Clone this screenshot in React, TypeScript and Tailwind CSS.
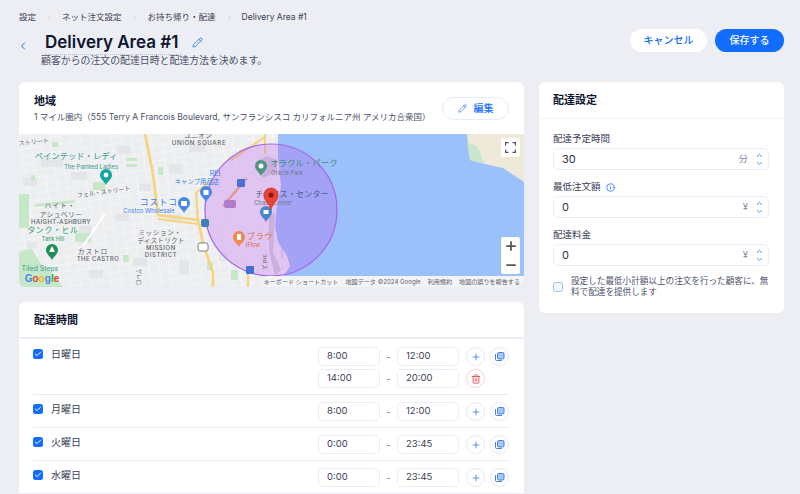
import { Check, ChevronDown, ChevronLeft, ChevronRight, ChevronUp, Info, Minus, Pencil, Plus, Trash2 } from "lucide-react";

const font = "font-['Inter','Noto_Sans_CJK_JP',sans-serif]";

function CopyIcon() {
    return (
        <svg width="11" height="11" viewBox="0 0 11 11" fill="none">
            <rect x="3.5" y="1.5" width="6.5" height="6.5" rx="1.2" fill="#a8c6f7" stroke="#3f80ee" />
            <path d="M1.5 3.5v5a1 1 0 0 0 1 1h5" stroke="#3f80ee" strokeLinecap="round" />
        </svg>
    );
}

const PIN = "M0 0c-2-4-6-6-6-10a6 6 0 1 1 12 0c0 4-4 6-6 10Z";

function Pin({ x, y, color, children }: { x: number; y: number; color: string; children?: React.ReactNode }) {
    return (
        <g transform={`translate(${x} ${y})`}>
            <path d={PIN} fill={color} />
            {children}
        </g>
    );
}

function MapArt() {
    const greys = [
        [22, 24, 22, 9], [52, 38, 16, 8], [4, 44, 14, 8], [98, 12, 14, 8], [120, 50, 12, 7],
        [150, 30, 14, 10], [170, 10, 16, 8], [150, 80, 12, 8], [96, 80, 14, 7], [60, 92, 12, 7],
        [114, 124, 14, 8], [160, 126, 10, 14], [200, 120, 8, 7], [8, 108, 10, 6], [70, 136, 14, 8],
    ];
    const greens = [
        [0, 60, 10, 34], [74, 48, 12, 8], [107, 24, 11, 3], [107, 30, 11, 3], [139, 33, 5, 8],
        [212, 136, 7, 10], [104, 121, 6, 7], [56, 99, 16, 9], [33, 8, 6, 5], [12, 41, 4, 5], [188, 128, 6, 8],
    ];
    return (
        <svg width="505" height="153" viewBox="0 0 505 153" className="block">
            <defs>
                <pattern id="streets" width="10" height="7.5" patternUnits="userSpaceOnUse" patternTransform="rotate(-8)">
                    <rect width="10" height="7.5" fill="#eceef0" />
                    <path d="M0 0H10M0 0V7.5" stroke="#f9fafb" strokeWidth="1" />
                </pattern>
            </defs>
            <rect width="505" height="153" fill="#9cc0f9" />
            <path d="M0 0H259V24L262 52L258 72L256 92L259 108L268 122L271 132L262 146L252 153H0Z" fill="url(#streets)" />
            {greys.map(([x, y, w, h], i) => (
                <rect key={i} x={x} y={y} width={w} height={h} fill="#e3e5e8" />
            ))}
            {greens.map(([x, y, w, h], i) => (
                <rect key={i} x={x} y={y} width={w} height={h} fill="#c6e8c8" />
            ))}
            <path d="M448 0H505V48L484 34L466 30L451 26Z" fill="#efe9da" />
            <path d="M448 8L458 12L466 30L451 26Z" fill="#c8e6cc" />
            <path d="M16 70L56 66V69L16 73Z" fill="#c6e8c8" />
            <path d="M0 118L12 114L22 130L34 140L44 153H0Z" fill="#c6e8c8" />

            <path d="M126 0L134 40L139 81L179 86L184 109L194 139V153" stroke="#f6d37c" strokeWidth="2.6" fill="none" />
            <path d="M139 85L179 90" stroke="#f6d37c" strokeWidth="2" fill="none" />
            <path d="M179 86L177 59L190 48" stroke="#f6d37c" strokeWidth="2.2" fill="none" />
            <path d="M212 26L246 3" stroke="#f6d37c" strokeWidth="2.2" fill="none" />
            <path d="M204 72L228 44" stroke="#f2b27c" strokeWidth="2.6" fill="none" />
            <path d="M229 133V153" stroke="#f6d37c" strokeWidth="2.2" fill="none" />
            <path d="M86 80L64 112" stroke="#fff" strokeWidth="2" />
            <path d="M246 0V20" stroke="#f6d37c" strokeWidth="2" fill="none" />

            <path d="M236 28L248 22L258 26V38L244 44Z" fill="#cfd3d8" />
            <path d="M250 84L256 78L254 118L262 136L256 142L250 116Z" fill="#d4d2d8" />
            <path d="M263 108V124M270 104V126" stroke="#b9b7d6" strokeWidth="0.8" />
            <circle cx="252" cy="76" r="66" fill="#be50f0" fillOpacity="0.27" stroke="#a266ea" strokeWidth="1.2" />

            <g fontFamily="Inter, 'Noto Sans CJK JP', sans-serif" textAnchor="middle">
                <text x="57" y="25" fontSize="8.3" fill="#3a9a92">ペインテッド・レディ</text>
                <text x="72" y="35" fontSize="6" fill="#3a9a92">The Painted Ladies</text>
                <text x="15" y="10" fontSize="6" fill="#5f6368" transform="rotate(-6 15 10)">ストリート</text>
                <text x="179" y="4" fontSize="7" fill="#5f6368">ユニオン</text>
                <text x="180" y="11" fontSize="6.2" fontWeight="500" letterSpacing="0.6" fill="#5f6368">UNION SQUARE</text>
                <text x="85" y="60" fontSize="6" fill="#5f6368" transform="rotate(-8 85 60)">フェル・ストリート</text>
                <text x="41" y="74" fontSize="6.8" letterSpacing="1" fill="#5f6368">ハイト・</text>
                <text x="42" y="83" fontSize="6.8" letterSpacing="0.4" fill="#5f6368">アシュベリー</text>
                <text x="42" y="90" fontSize="6" fontWeight="500" letterSpacing="0.4" fill="#5f6368">HAIGHT-ASHBURY</text>
                <text x="34" y="99" fontSize="8" letterSpacing="0.6" fill="#3a9a6a">タンク・ヒル</text>
                <text x="34" y="107" fontSize="5.6" fill="#3a9a6a">Tank Hill</text>
                <text x="21" y="137" fontSize="7" fill="#3a9a92">Tiled Steps</text>
                <text x="74" y="120" fontSize="6.8" letterSpacing="0.8" fill="#5f6368">カストロ</text>
                <text x="79" y="127" fontSize="6" fontWeight="500" letterSpacing="0.4" fill="#5f6368">THE CASTRO</text>
                <text x="141" y="101" fontSize="6.6" letterSpacing="0.6" fill="#5f6368">ミッション・</text>
                <text x="142" y="109" fontSize="6.6" letterSpacing="0.2" fill="#5f6368">ディストリクト</text>
                <text x="142" y="116" fontSize="6" fontWeight="500" letterSpacing="0.6" fill="#5f6368">MISSION</text>
                <text x="142" y="123" fontSize="6" fontWeight="500" letterSpacing="0.6" fill="#5f6368">DISTRICT</text>
                <text x="140" y="71" fontSize="8.5" letterSpacing="1" fill="#3f7fe8">コストコ</text>
                <text x="130" y="79" fontSize="6" fill="#3f7fe8">Costco Wholesale</text>
                <text x="196" y="42" fontSize="7" fill="#3f7fe8">REI</text>
                <text x="178" y="50" fontSize="6.4" fill="#3f7fe8">キャンプ用品店</text>
                <text x="285" y="32" fontSize="8.3" letterSpacing="0.2" fill="#3c8f76">オラクル・パーク</text>
                <text x="268" y="41" fontSize="5.8" fill="#6b7a88">Oracle Park</text>
                <text x="273" y="63" fontSize="8" letterSpacing="0.2" fill="#45608a">チェイス・センター</text>
                <text x="254" y="71" fontSize="5.8" fill="#6b7a88">Chase Center</text>
                <text x="241" y="105" fontSize="8" fill="#d96a3c" letterSpacing="0.6">ブラウ</text>
                <text x="234" y="113" fontSize="5.6" fill="#d96a3c">iFlow</text>
                <text x="118" y="143" fontSize="5.4" fill="#5f6368" transform="rotate(90 118 143)">ゲレロ</text>
                <text x="244" y="128" fontSize="5.4" fill="#5f6368" transform="rotate(90 244 128)">3rd ス</text>
            </g>

            <Pin x={87} y={51} color="#12a6a0"><circle cy="-10" r="2.4" fill="#fff" /></Pin>
            <Pin x={165} y={79} color="#4a86ea"><rect x="-3" y="-12" width="6" height="5" fill="#fff" /></Pin>
            <Pin x={187} y={68} color="#4a86ea"><rect x="-2.5" y="-12" width="5" height="5" fill="#fff" /></Pin>
            <Pin x={33} y={126} color="#1f8f55"><path d="M0 -14l3 6h-6Z" fill="#fff" /></Pin>
            <Pin x={242} y={42} color="#4f9483"><circle cy="-10" r="2.5" fill="#fff" /></Pin>
            <Pin x={247} y={88} color="#4a84c9"><rect x="-2.5" y="-12" width="5" height="4" fill="#fff" /></Pin>
            <Pin x={220} y={113} color="#ee8a4d"><rect x="-2" y="-13" width="4" height="6" fill="#fff" /></Pin>
            <rect x="218" y="45" width="8" height="8" rx="1" fill="#4a70d8" />
            <rect x="227" y="132" width="8" height="8" rx="1" fill="#3f6fd8" />
            <rect x="182" y="85" width="8" height="8" rx="2" fill="#3f7fb8" />
            <rect x="179" y="109" width="10" height="8" rx="2" fill="#fff" stroke="#5f6368" strokeWidth="0.8" />
            <rect x="205" y="66" width="12" height="8" rx="2" fill="#b07cc8" />

            <path d="M252 54c-4.5 0-7.2 3.4-7.2 7.2c0 5.5 5.5 8 7.2 14.8c1.7-6.8 7.2-9.3 7.2-14.8c0-3.8-2.7-7.2-7.2-7.2Z" fill="#ea4335" stroke="#b3261e" strokeWidth="0.5" />
            <circle cx="252" cy="61" r="2.6" fill="#8c1a12" />
            <text x="23" y="148" fontFamily="'Liberation Sans', sans-serif" fontSize="10" textAnchor="middle" fill="#4285f4" fontWeight="700">
                G<tspan fill="#ea4335">o</tspan><tspan fill="#fbbc05">o</tspan><tspan fill="#4285f4">g</tspan><tspan fill="#34a853">l</tspan><tspan fill="#ea4335">e</tspan>
            </text>
        </svg>
    );
}

function TimeBox({ value }: { value: string }) {
    return (
        <div className="w-[62px] h-[19px] flex items-center pl-2 bg-white border border-[#e6eefb] rounded-[5px] text-[9.5px] text-[#3b4057]">
            {value}
        </div>
    );
}

function RoundBtn({ children, red }: { children: React.ReactNode; red?: boolean }) {
    return (
        <div className={`w-[19px] h-[19px] flex items-center justify-center rounded-full border ${red ? "border-[#f8d3d0]" : "border-[#e3ecfb]"}`}>
            {children}
        </div>
    );
}

function TimeRow({ from, to, action }: { from: string; to: string; action?: "copy" | "delete" }) {
    return (
        <div className="flex items-center">
            <TimeBox value={from} />
            <span className="w-[17px] text-center text-[9px] text-[#6b7089]">-</span>
            <TimeBox value={to} />
            <div className="flex items-center gap-[5px] ml-[7px] w-[43px]">
                {action === "delete" ? (
                    <RoundBtn red><Trash2 size={10} color="#e0483e" /></RoundBtn>
                ) : (
                    <>
                        <RoundBtn><Plus size={10} color="#3f80ee" /></RoundBtn>
                        <RoundBtn><CopyIcon /></RoundBtn>
                    </>
                )}
            </div>
        </div>
    );
}

function DayRow({ day, slots, last }: { day: string; slots: string[][]; last?: boolean }) {
    return (
        <div className={`flex justify-between pt-[7px] pb-[6px] ${last ? "" : "border-b border-[#e9ecf3]"}`}>
            <div className="flex items-center h-[14px] gap-2">
                <span className="w-[10px] h-[10px] rounded-[2.5px] bg-[#116dff] flex items-center justify-center">
                    <Check size={8} color="white" strokeWidth={3} />
                </span>
                <span className="text-[10px] text-[#3b4057]">{day}</span>
            </div>
            <div className="flex flex-col gap-[3px]">
                {slots.map((s, i) => (
                    <TimeRow key={i} from={s[0]} to={s[1]} action={i === 0 ? "copy" : "delete"} />
                ))}
            </div>
        </div>
    );
}

function NumberField({ label, value, unit, info }: { label: string; value: string; unit: string; info?: boolean }) {
    return (
        <div className="flex flex-col">
            <div className="flex items-center gap-[5px] h-[14px] text-[9.5px] text-[#3b4057]">
                {label}
                {info && <Info size={9} color="#116dff" />}
            </div>
            <div className="mt-[2px] h-[22px] flex items-center pl-2 pr-[4px] border border-[#e6eefb] rounded-[5px] text-[11px] text-[#2a2f45]">
                <span className="flex-1">{value}</span>
                <span className="text-[9.5px] text-[#868aa5] mr-[7px]">{unit}</span>
                <span className="flex flex-col">
                    <ChevronUp size={9} color="#3f80ee" strokeWidth={2.4} className="-mb-[1px]" />
                    <ChevronDown size={9} color="#3f80ee" strokeWidth={2.4} />
                </span>
            </div>
        </div>
    );
}

export default function App() {
    return (
        <main className={`${font} h-[494px] w-[800px] overflow-hidden bg-[#eceef3] pl-[19px] pr-[16px] pt-[11px] text-[#162d3d]`}>
            <nav className="flex items-center h-[13px] text-[8.5px] text-[#3b4057]">
                <span>設定</span>
                <ChevronRight size={10} color="#b6bccc" strokeWidth={1.2} className="mx-[8px]" />
                <span>ネット注文設定</span>
                <ChevronRight size={10} color="#b6bccc" strokeWidth={1.2} className="mx-[8px]" />
                <span>お持ち帰り・配達</span>
                <ChevronRight size={10} color="#b6bccc" strokeWidth={1.2} className="mx-[8px]" />
                <span>Delivery Area #1</span>
            </nav>

            <header className="flex justify-between mt-[5px] h-[53px]">
                <div className="flex">
                    <ChevronLeft size={12} color="#116dff" className="mt-[11px] -ml-[2px]" />
                    <div className="ml-[16px] pt-[1px]">
                        <div className="flex items-center">
                            <h1 className="border-b border-dotted border-[#b6bccc] text-[17px] leading-[24px] font-semibold text-[#0d1530] pr-[3px]">Delivery Area #1</h1>
                            <Pencil size={11} color="#3f80ee" className="ml-[11px]" />
                        </div>
                        <p className="-ml-[4px] -mt-[1px] text-[9.9px] leading-[13px] text-[#4c5169]">顧客からの注文の配達日時と配達方法を決めます。</p>
                    </div>
                </div>
                <div className="flex gap-2">
                    <button className="w-[77px] h-[23px] rounded-full bg-white text-[10px] font-medium text-[#116dff]">キャンセル</button>
                    <button className="w-[69px] h-[23px] rounded-full bg-[#116dff] text-[10px] font-medium text-white">保存する</button>
                </div>
            </header>

            <div className="flex gap-[15px] items-start">
                <div className="w-[505px] flex flex-col gap-[15px]">
                    <section className="bg-white rounded-[6px] overflow-hidden">
                        <div className="flex justify-between items-center h-[52px] pl-[15px] pr-[15px]">
                            <div>
                                <h2 className="text-[11px] leading-[14px] font-semibold text-[#0d1530]">地域</h2>
                                <p className="mt-[3px] text-[8.5px] leading-[12px] text-[#4c5169]">1 マイル圏内（555 Terry A Francois Boulevard, サンフランシスコ カリフォルニア州 アメリカ合衆国）</p>
                            </div>
                            <button className="w-[67px] h-[23px] flex items-center justify-center gap-[7px] rounded-full border border-[#e3ecfb] text-[10px] font-medium text-[#116dff]">
                                <Pencil size={9} color="#3f80ee" />編集
                            </button>
                        </div>
                        <div className="relative h-[153px]">
                            <MapArt />
                            <div className="absolute right-[4px] top-[4px] w-[19px] h-[19px] bg-white rounded-[2px] flex items-center justify-center">
                                <svg width="11" height="11" viewBox="0 0 11 11" fill="none" stroke="#555" strokeWidth="1.2">
                                    <path d="M.6 3.5V.6h2.9M7.5.6h2.9v2.9M.6 7.5v2.9h2.9M7.5 10.4h2.9V7.5" />
                                </svg>
                            </div>
                            <div className="absolute right-[4px] bottom-[13px] w-[19px] h-[37px] bg-white rounded-[2px] flex flex-col items-center justify-center gap-[5px]">
                                <Plus size={14} color="#555" strokeWidth={3} />
                                <Minus size={14} color="#555" strokeWidth={3} />
                            </div>
                            <div className="absolute right-0 bottom-0 h-[11px] w-[259px] bg-[#f3f4f6] flex items-center justify-end gap-[7px] pr-[4px] text-[6.1px] text-[#5f6368] whitespace-nowrap">
                                <span>キーボード ショートカット</span>
                                <span>地図データ ©2024 Google</span>
                                <span>利用規約</span>
                                <span>地図の誤りを報告する</span>
                            </div>
                        </div>
                    </section>

                    <section className="bg-white rounded-t-[6px]">
                        <h2 className="h-[37px] pt-[1px] flex items-center pl-[15px] text-[11px] font-semibold text-[#0d1530] border-b-2 border-[#eceef3]">配達時間</h2>
                        <div className="pl-[14px] pr-[15px] pt-[1px]">
                            <DayRow day="日曜日" slots={[["8:00", "12:00"], ["14:00", "20:00"]]} />
                            <DayRow day="月曜日" slots={[["8:00", "12:00"]]} />
                            <DayRow day="火曜日" slots={[["0:00", "23:45"]]} />
                            <DayRow day="水曜日" slots={[["0:00", "23:45"]]} last />
                        </div>
                    </section>
                </div>

                <aside className="w-[245px] bg-white rounded-[6px]">
                    <h2 className="h-[37px] flex items-center pl-[14px] text-[11px] font-semibold text-[#0d1530] border-b border-[#f0f2f6]">配達設定</h2>
                    <div className="pl-[14px] pr-[15px] pt-[13px] pb-[15px] flex flex-col gap-[10px]">
                        <NumberField label="配達予定時間" value="30" unit="分" />
                        <NumberField label="最低注文額" value="0" unit="¥" info />
                        <NumberField label="配達料金" value="0" unit="¥" />
                        <div className="flex gap-2 items-center">
                            <span className="w-[10px] h-[10px] shrink-0 rounded-[2.5px] border border-[#9dbff5] bg-[#f4f8fe]" />
                            <p className="text-[8.6px] leading-[11px] text-[#4c5169]">設定した最低小計額以上の注文を行った顧客に、無料で配達を提供します</p>
                        </div>
                    </div>
                </aside>
            </div>
        </main>
    );
}
